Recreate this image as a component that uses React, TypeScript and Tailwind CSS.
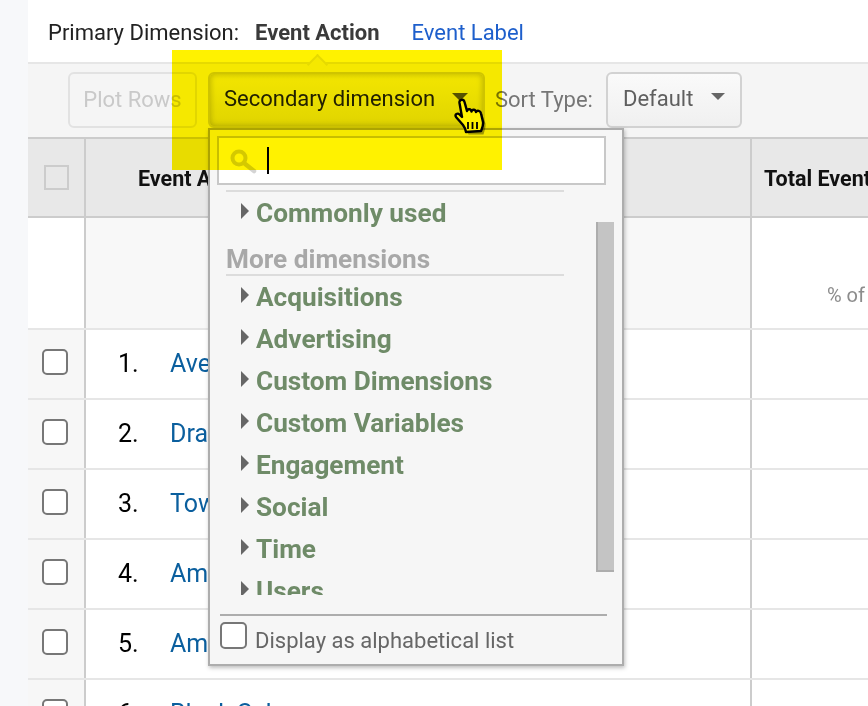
import React from "react";

const rows = [
  { n: "1.", label: "Ave" },
  { n: "2.", label: "Dra" },
  { n: "3.", label: "Tow" },
  { n: "4.", label: "Am" },
  { n: "5.", label: "Am" },
  { n: "6.", label: "Black Sab" },
];

const items = ["Acquisitions", "Advertising", "Custom Dimensions", "Custom Variables", "Engagement", "Social", "Time", "Users"];

const Caret = () => <span className="w-0 h-0 border-y-[8px] border-y-transparent border-l-[8px] border-l-[#666] mr-[7px] -mt-[6px] shrink-0" />;

const MenuItem = ({ label }: { label: string }) => (
  <div className="h-[42px] flex items-center pl-[31px] pt-[2px] text-[26.200px] font-bold text-[#6f8b68] shrink-0">
    <Caret />
    {label}
  </div>
);

const HandCursor = () => (
  <svg width="34" height="38" viewBox="0 0 34 38" className="absolute left-[453px] top-[98px]">
    <path
      d="M11 30 L4 21 C2.500 18.500 5.500 16.500 7.500 18.500 L10 21 L6.500 5 C6 1.500 10.500 0.500 11.500 4 L14 13 C14.500 10.500 18 10.500 18.500 13.500 C19 11 22.500 11 23 14 C24 12 27.500 12.500 28 15.500 L31 24 C31.500 28 30 31 29 35 L14 35 C13.500 33 12.500 31.500 11 30 Z"
      fill="#000"
      opacity="0.35"
      transform="translate(1.500 1.500)"
    />
    <path
      d="M10 27 L3 19 C1.500 16.500 4.500 14.500 6.500 16.500 L9 19 L6.500 5 C6 1.500 10.500 0.500 11.500 4 L14 13 C14.500 10.500 18 10.500 18.500 13.500 C19 11 22.500 11 23 14 C24 12 27.500 12.500 28 15.500 L30 24 C30.500 28 29 30 28 33 L13 34 C12.500 31 11.500 29 10 27 Z"
      fill="#fff200"
      stroke="#000"
      strokeWidth="2.400"
      strokeLinejoin="round"
    />
    <path d="M15 24 V31 M19.500 24 V31 M24 24 V31" stroke="#000" strokeWidth="1.800" />
  </svg>
);

export default function App() {
  return (
    <div className="relative w-[868px] h-[706px] overflow-hidden bg-white flex font-['Roboto',sans-serif]">
      <div className="w-[28px] shrink-0 bg-[#f7f8fa]" />

      <div className="flex-1 min-w-0 flex flex-col">
        <div className="h-[62px] shrink-0 flex items-center pl-5 pt-[2px] text-[22px] text-[#222]">
          <span>Primary Dimension:</span>
          <span className="ml-4 font-bold text-[#3a3a3a]">Event Action</span>
          <span className="ml-8 text-[#1e5fcc]">Event Label</span>
        </div>

        <div className="relative h-[77px] shrink-0 bg-[#f5f5f5] border-y-2 border-t-[#e6e6e6] border-b-[#cccccc] flex items-center pl-10 text-[22px]">
          <span className="absolute left-[282px] -top-[7px] w-[15px] h-[15px] rotate-45 bg-[#f5f5f5] border-l-2 border-t-2 border-[#e6e6e6]" />
          <div className="w-[129px] h-14 -mt-[2px] flex items-center justify-center rounded-md border-2 border-[#e2e2e2] text-[#c9c9c9]">Plot Rows</div>
          <div className="relative ml-[11px] -mt-[2px] w-[277px] h-14 flex items-center pl-[14px] pb-[2px] rounded-md border-2 border-[#cfcfcf] bg-gradient-to-b from-[#f3f3f3] to-[#e0e0e0] shadow-[inset_0_0_6px_rgba(0,0,0,0.25)] text-[#222]">
            Secondary dimension
            <span className="ml-auto mr-[15px] mb-1 w-0 h-0 border-x-[8px] border-x-transparent border-t-[8px] border-t-[#555]" />
          </div>
          <span className="ml-[10px] -mt-[2px] text-[#767676]">Sort Type:</span>
          <div className="ml-[13px] -mt-[2px] w-[136px] h-14 flex items-center pl-[15px] pb-[2px] rounded-md border-2 border-[#d2d2d2] bg-gradient-to-b from-[#fafafa] to-[#f0f0f0] text-[#5f5f5f]">
            Default
            <span className="ml-auto mr-[15px] mb-1 w-0 h-0 border-x-[7px] border-x-transparent border-t-[7px] border-t-[#666]" />
          </div>
        </div>

        <div className="h-[79px] shrink-0 flex bg-[#e8e8e8] border-b-2 border-[#cccccc] text-[21.500px] font-bold text-[#111]">
          <div className="w-[58px] shrink-0 flex items-center justify-center border-x-2 border-l-0 border-[#cccccc]">
            <span className="w-[25px] h-[25px] border-2 border-[#cccccc]" />
          </div>
          <div className="w-[666px] shrink-0 flex items-center pl-[52px] pt-[3px] border-r-2 border-[#cccccc]">Event Action</div>
          <div className="flex-1 whitespace-nowrap flex items-center pl-3 pt-[3px] overflow-hidden">Total Events</div>
        </div>

        <div className="h-[112px] shrink-0 flex border-b-2 border-[#e6e6e6]">
          <div className="w-[58px] shrink-0 border-r-2 border-[#cccccc]" />
          <div className="w-[666px] shrink-0 bg-[#f8f8f8] border-r-2 border-[#cccccc]" />
          <div className="flex-1 pt-[62px] pl-[75px] whitespace-nowrap overflow-hidden text-[20px] text-[#8c8c8c]">% of Total</div>
        </div>

        {rows.map((r) => (
          <div key={r.n} className="h-[70px] shrink-0 flex border-b-2 border-[#e6e6e6] text-[25px]">
            <div className="w-[58px] shrink-0 flex items-center justify-center bg-[#f7f7f7] border-r-2 border-[#cccccc]">
              <span className="w-[26px] h-[26px] -ml-[2px] -mt-[4px] rounded-[5px] border-2 border-[#777] bg-white" />
            </div>
            <div className="w-[666px] shrink-0 flex items-center border-r-2 border-[#cccccc]">
              <span className="ml-[32px] w-[52px] text-black">{r.n}</span>
              <span className="text-[#0b5f9e]">{r.label}</span>
            </div>
            <div className="flex-1" />
          </div>
        ))}
      </div>

      {/* dimension menu */}
      <div className="absolute left-[208px] top-[128px] w-[416px] h-[538px] bg-[#f6f6f6] border-2 border-[#adadad] shadow-[1px_2px_4px_rgba(0,0,0,0.25)] flex flex-col">
        <div className="ml-[7px] mt-[6px] w-[389px] h-[49px] shrink-0 bg-white border-2 border-[#c8c8c8] flex items-center pl-[10px]">
          <svg width="30" height="26" viewBox="0 0 30 26" fill="none" stroke="#d4d4d4">
            <circle cx="10" cy="10" r="6.500" strokeWidth="4" />
            <path d="M15 15 L25 23" strokeWidth="4.500" strokeLinecap="round" />
          </svg>
          <span className="ml-[8px] w-[2px] h-[27px] bg-black" />
        </div>
        <div className="ml-[16px] mt-[5px] w-[338px] h-[2px] shrink-0 bg-[#dcdcdc]" />
        <div className="h-[403px] shrink-0 overflow-hidden flex flex-col">
          <div><MenuItem label="Commonly used" /></div>
          <div className="ml-[16px] mt-[10px] w-[338px] h-[32px] shrink-0 border-b-2 border-[#dcdcdc] text-[26.200px] leading-[30px] font-bold text-[#a8a8a8]">More dimensions</div>
          {items.map((i) => <MenuItem key={i} label={i} />)}
        </div>
        <div className="absolute left-[386px] top-[92px] w-[18px] h-[350px] bg-[#c4c4c4] border-l-2 border-b-2 border-[#adadad]" />
        <div className="ml-[10px] mt-[19px] w-[387px] h-[2px] shrink-0 bg-[#adadad]" />
        <div className="flex items-start ml-[10px] mt-[6px] text-[22px] text-[#666]">
          <span className="w-[27px] h-[27px] rounded-[5px] border-2 border-[#777] bg-white" />
          <span className="ml-[8px] mt-[2px]">Display as alphabetical list</span>
        </div>
      </div>

      {/* yellow highlight */}
      <div className="absolute left-[172px] top-[50px] w-[330px] h-[120px] bg-[#fff200] mix-blend-multiply" />
      <HandCursor />
    </div>
  );
}
